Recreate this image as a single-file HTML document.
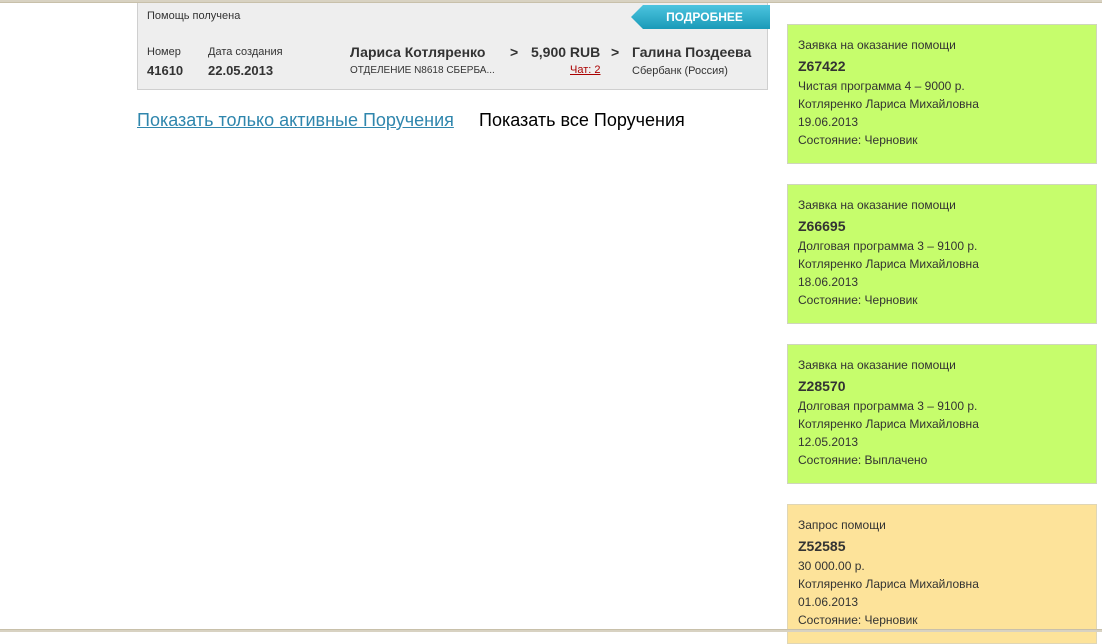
<!DOCTYPE html>
<html><head><meta charset="utf-8">
<style>
*{margin:0;padding:0;box-sizing:border-box}
body{width:1102px;height:632px;overflow:hidden;background:#fff;position:relative;font-family:"Liberation Sans",Arial,sans-serif;color:#333}
.topline{position:absolute;left:0;top:0;width:1102px;height:3px;background:#d8d2c2;border-bottom:1px solid #c8c0aa}
.botline{position:absolute;left:0;top:629px;width:1102px;height:3px;background:#d8d2c2;border-top:1px solid #c8c0aa}
.box{position:absolute;left:137px;top:3px;width:631px;height:87px;background:#eeeeee;border:1px solid #cfcfcf;border-top:none}
.abs{position:absolute;white-space:nowrap}
.s11{font-size:11px;color:#333}
.b13{font-size:13px;font-weight:bold;color:#333}
.btn{position:absolute;left:631px;top:5px;width:139px;height:24px}
.btn span{position:absolute;left:0;width:139px;text-align:center;top:5px;color:#fff;font-weight:bold;font-size:12px;padding-left:8px}
.links{position:absolute;top:110px;font-size:18px}
.card{position:absolute;left:787px;width:310px;height:140px;background:#c6fd6c;border:1px solid #cfd6bb;padding:11px 0 0 10px;font-size:12px;color:#333;line-height:18px}
.card b{display:block;font-size:14px;margin:3px 0 2px;line-height:18px}
.y{background:#fde39a;border-color:#e0d6b5;height:140px}
</style></head><body>
<div class="topline"></div>
<div class="box"></div>
<div class="abs s11" style="left:147px;top:10px">Помощь получена</div>
<svg class="btn" viewBox="0 0 139 24"><defs><linearGradient id="g" x1="0" y1="0" x2="0" y2="1"><stop offset="0" stop-color="#4cc4df"/><stop offset="1" stop-color="#1a9ab8"/></linearGradient></defs><path d="M0 12 L12 0 L139 0 L139 24 L12 24 Z" fill="url(#g)"/></svg>
<div class="btn"><span>ПОДРОБНЕЕ</span></div>
<div class="abs s11" style="left:147px;top:46px">Номер</div>
<div class="abs b13" style="left:147px;top:63px">41610</div>
<div class="abs s11" style="left:208px;top:46px">Дата создания</div>
<div class="abs b13" style="left:208px;top:63px">22.05.2013</div>
<div class="abs" style="left:350px;top:44px;font-size:14px;font-weight:bold;color:#333">Лариса Котляренко</div>
<div class="abs" style="left:350px;top:65px;font-size:10px">ОТДЕЛЕНИЕ N8618 СБЕРБА...</div>
<div class="abs" style="left:510px;top:44px;font-size:14px;font-weight:bold">&gt;</div>
<div class="abs" style="left:531px;top:44px;font-size:14px;font-weight:bold">5,900 RUB</div>
<div class="abs" style="left:570px;top:64px;font-size:11px;color:#a00;text-decoration:underline">Чат: 2</div>
<div class="abs" style="left:611px;top:44px;font-size:14px;font-weight:bold">&gt;</div>
<div class="abs" style="left:632px;top:44px;font-size:14px;font-weight:bold">Галина Поздеева</div>
<div class="abs s11" style="left:632px;top:65px">Сбербанк (Россия)</div>
<div class="links" style="left:137px;color:#2f86ad;text-decoration:underline">Показать только активные Поручения</div>
<div class="links" style="left:479px;color:#000">Показать все Поручения</div>

<div class="card" style="top:24px">Заявка на оказание помощи<b>Z67422</b>Чистая программа 4 – 9000 р.<br>Котляренко Лариса Михайловна<br>19.06.2013<br>Состояние: Черновик</div>
<div class="card" style="top:184px">Заявка на оказание помощи<b>Z66695</b>Долговая программа 3 – 9100 р.<br>Котляренко Лариса Михайловна<br>18.06.2013<br>Состояние: Черновик</div>
<div class="card" style="top:344px">Заявка на оказание помощи<b>Z28570</b>Долговая программа 3 – 9100 р.<br>Котляренко Лариса Михайловна<br>12.05.2013<br>Состояние: Выплачено</div>
<div class="card y" style="top:504px">Запрос помощи<b>Z52585</b>30 000.00 р.<br>Котляренко Лариса Михайловна<br>01.06.2013<br>Состояние: Черновик</div>
<div class="botline"></div>
</body></html>
